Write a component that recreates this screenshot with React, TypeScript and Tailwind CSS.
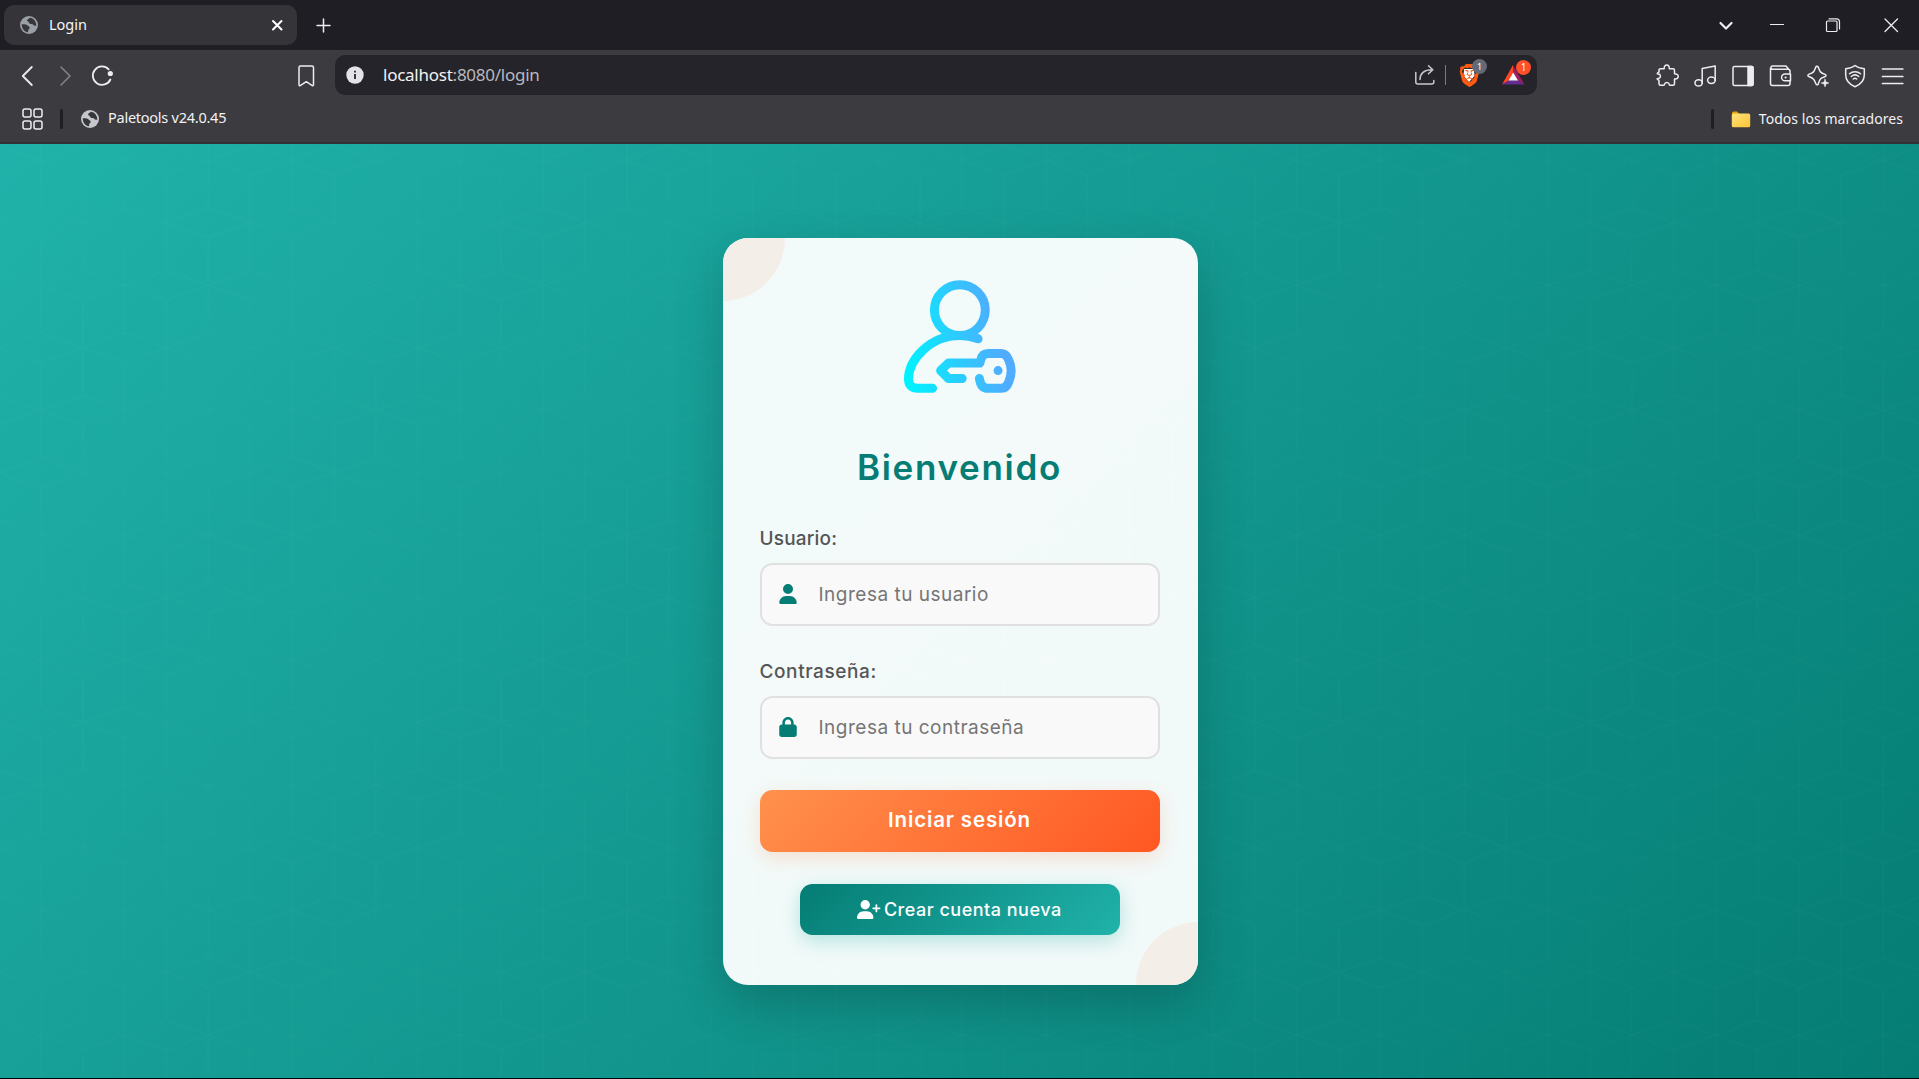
import type { ReactNode } from "react";
import { FaLock, FaUser, FaUserPlus } from "react-icons/fa6";
import { SiBrave } from "react-icons/si";

const LINE = {
  fill: "none",
  stroke: "currentColor",
  strokeWidth: 1.5,
  strokeLinecap: "round",
  strokeLinejoin: "round",
} as const;

function Icon({ className = "", color = "text-[#ededf0]", children }: { className?: string; color?: string; children: ReactNode }) {
  return (
    <svg viewBox="0 0 24 24" className={`size-6 shrink-0 ${color} ${className}`} {...LINE}>
      {children}
    </svg>
  );
}

function Globe({ className = "" }: { className?: string }) {
  return (
    <svg viewBox="0 0 18 18" className={`size-[18px] shrink-0 ${className}`}>
      <circle cx="9" cy="9" r="9" fill="currentColor" />
      <path
        d="M1.700 8.200C3.800 8 6.200 8.200 7.300 9.300c1.200 1.200 2.300 1.300 2.400 2.500.1 1.100-1.300 1.200-1.500 2.300l-.2 2.100C4.400 15.700 1.700 12.500 1.700 8.200ZM9.800 1.800C9 3 7.300 3 7.100 4.200c-.2 1.200 1.400 1.100 1.700 2.100.3 1.100 1.300 1.900 2.700 1.800 1.500-.1 2 1.200 3 1.600.8.300 1.500.1 1.800-.2C16.400 5.600 13.600 2.200 9.800 1.800Z"
        fill="#37363b"
      />
    </svg>
  );
}

function TabStrip() {
  return (
    <div className="flex h-[50px] items-center bg-[#1f1e24] pl-1 pr-4">
      <div className="-mt-px flex h-10 w-[293px] items-center rounded-[10px] bg-[#353439] pl-4 pr-2">
        <Globe className="text-[#9aa0a6]" />
        <span className="ml-[11px] flex-1 text-[14.5px] text-[#f5f5f7]">Login</span>
        <Icon color="text-white">
          <path d="M8 8l8.500 8.500m0-8.500L8 16.500" strokeWidth="2" />
        </Icon>
      </div>
      <Icon className="ml-[14px]">
        <path d="M12.500 6v13M6 12.500h13" />
      </Icon>
      <div className="ml-auto flex items-center">
        <Icon>
          <path d="M6.500 10l5.500 5.500L17.500 10" strokeWidth="2.200" />
        </Icon>
        <Icon className="ml-[27px]">
          <path d="M5.500 11.500h13" strokeWidth="1.200" />
        </Icon>
        <Icon className="ml-8">
          <rect x="5.500" y="8" width="10.500" height="10.500" rx="1" strokeWidth="1.200" />
          <path d="M8 5.800h7.500a3 3 0 0 1 3 3V16" strokeWidth="1.200" />
        </Icon>
        <Icon className="ml-[34px]">
          <path d="M6 6l12.500 12.500M18.500 6L6 18.500" strokeWidth="1.300" />
        </Icon>
      </div>
    </div>
  );
}

function Toolbar() {
  return (
    <div className="flex h-[51px] items-center pl-[15px] pr-[14px]">
      <Icon>
        <path d="M16.800 3L7.800 12l9 9" strokeWidth="1.800" />
      </Icon>
      <Icon className="ml-[14px]" color="text-[#85848a]">
        <path d="M8 3l9 9-9 9" strokeWidth="1.500" />
      </Icon>
      <Icon className="ml-[13px]">
        <path d="M20.400 15.500a9.200 9.200 0 1 1-1.700-10.200" strokeWidth="1.800" />
        <circle cx="20.300" cy="9.500" r="2.600" fill="currentColor" stroke="none" />
      </Icon>
      <Icon className="ml-[181px]">
        <path d="M4 3.500a1.500 1.500 0 0 1 1.500-1.500h11.500a1.500 1.500 0 0 1 1.500 1.500v17.500a.8.8 0 0 1-1.200.6L11.300 17.700l-6.100 3.900a.8.8 0 0 1-1.200-.6Z" />
      </Icon>
      <div className="-mt-px ml-4 flex h-10 w-[1202px] items-center rounded-[10px] bg-[#25242a] pl-[11px] pr-[6px]">
        <svg viewBox="0 0 18 18" className="size-[18px]">
          <circle cx="9" cy="9" r="8.700" fill="#e4e3ea" />
          <path d="M9 8v5M9 4.800v1.700" stroke="#25242a" strokeWidth="1.800" />
        </svg>
        <span className="ml-[19px] text-[17px] tracking-[-0.25px] text-[#f2f2f4]">
          localhost<span className="text-[#b9b8bf]">:8080/login</span>
        </span>
        <Icon className="ml-auto" color="text-[#c9c8ce]">
          <path d="M2.800 9.500v9.500a2 2 0 0 0 2 2h14a2 2 0 0 0 2-2v-1.500M7 16.500c0-6 4-9.800 12-9.800M15.500 2.800l4.300 4-4.300 4" />
        </Icon>
        <div className="ml-2 h-5 w-px bg-[#7b7a80]" />
        <div className="relative ml-[13px] mr-px flex h-6 w-[20px] items-center justify-center">
          <svg viewBox="0 0 20 24" className="absolute inset-0 size-full">
            <path d="M5 6h10l.5 7-5.500 6-5.500-6Z" fill="#fff" />
          </svg>
          <SiBrave className="relative size-[23px] shrink-0 text-[#ff5a12]" />
          <span className="absolute -top-1 left-[13px] flex size-[15px] items-center justify-center rounded-full bg-[#656875] text-[9px] text-white">
            1
          </span>
        </div>
        <div className="relative ml-[22px] h-6 w-[29px]">
          <svg viewBox="0 0 29 24" className="size-full">
            <path d="M11 2L0 21.500l7-4L11.500 10Z" fill="#ff4724" />
            <path d="M11 2l11.500 19.500-7-4L11.500 10Z" fill="#9e1f63" />
            <path d="M0 21.500h22.500l-7-4.200H7Z" fill="#662d91" />
            <path d="M11.200 9.500l4.800 8H6.600Z" fill="#fff" />
          </svg>
          <span className="absolute -top-[3px] left-[14px] flex size-[15px] items-center justify-center rounded-full bg-[#ff5029] text-[10px] text-white">
            1
          </span>
        </div>
      </div>
      <div className="ml-auto flex gap-[13.600px]">
        <Icon>
          <path d="M4 6.200a1.500 1.500 0 0 1 1.500-1.500h3.300c.4 0 .6-.3.500-.7a2.500 2.500 0 1 1 4.900 0c-.1.400.1.700.5.700H18a1.500 1.500 0 0 1 1.500 1.500v3.200c0 .4.300.6.700.6a2.500 2.500 0 1 1 0 4.900c-.4-.1-.7.100-.7.500v4.300a1.500 1.500 0 0 1-1.500 1.500h-2.900c-.4 0-.7-.3-.8-.7a2.500 2.500 0 0 0-4.900 0c-.1.400-.4.700-.8.700H5.500A1.500 1.500 0 0 1 4 19.700v-3c0-.4-.3-.7-.700-.8-.6-.200-1.200-.300-1.200-1.100 2.500 0 3.600-1.500 3.300-3.100C5.200 10.200 4 9.800 2.800 9.900c-.8 0-.6-1 .2-1.200.7-.2 1-.600 1-1.100Z" />
        </Icon>
        <Icon>
          <ellipse cx="5.600" cy="18.900" rx="3.600" ry="3.200" />
          <ellipse cx="18.400" cy="16.300" rx="3.800" ry="3.200" />
          <path d="M9.200 18.900V4.600L22.200 2v14.300" />
        </Icon>
        <Icon>
          <rect x="2" y="2.500" width="20" height="19" rx="1.500" />
          <path d="M17 2.500h4a1 1 0 0 1 1 1v17a1 1 0 0 1-1 1h-4Z" fill="currentColor" />
        </Icon>
        <Icon>
          <path d="M22 9.500V7.200a2 2 0 0 0-2-2H4.200a1.600 1.600 0 0 1 0-3.100H18l2.500 3M2.500 4v15.500a2 2 0 0 0 2 2H20a2 2 0 0 0 2-2V17" />
          <path d="M22.500 10H17a3.400 3.400 0 0 0 0 6.800h5.500Z" />
          <path d="M17.500 13.400h.2" strokeWidth="2" />
        </Icon>
        <Icon>
          <path d="M11 2.300c.7 0 1 .3 1.200.8 1.500 4.700 2.200 5.600 7 7.300 1.100.4 1.100 1.700 0 2.100-2 .7-3.400 1.300-4.400 2.100-1.200 1-1.600 2.400-2.500 5.400-.3 1.100-1.900 1.100-2.300 0C8.400 15.500 7.500 14.200 2.700 12.500c-1.100-.4-1.100-1.700 0-2.100C7.500 8.700 8.300 7.800 9.800 3.100c.2-.5.500-.8 1.200-.8Z" />
          <path d="M19 15l1 3 3 1-3 1-1 3-1-3-3-1 3-1Z" fill="currentColor" strokeWidth=".5" />
        </Icon>
        <Icon>
          <path d="M12 1.500c3 2.500 6 3 9.300 3.200V11c0 6-4 9.500-9.300 11.700C6.700 20.500 2.700 17 2.700 11V4.700C6 4.500 9 4 12 1.500Z" />
          <path d="M6.500 9.700c3-2.700 8-2.700 11 0M8.300 12.500c2.200-1.900 5.200-1.900 7.400 0M10.300 15c1.100-.9 2.300-.9 3.400 0" />
        </Icon>
        <Icon>
          <path d="M1.500 5h20.300M1.500 12.500h20.300M1.500 19.500h20.300" strokeWidth="1.700" />
        </Icon>
      </div>
    </div>
  );
}

function BookmarkBar() {
  return (
    <div className="flex h-[41px] items-center pb-[5px] pl-[21px] pr-4 text-[#f2f2f4]">
      <Icon>
        <rect x="2" y="2" width="8" height="8" rx="2" />
        <rect x="13" y="2" width="8" height="8" rx="2" />
        <rect x="2" y="14" width="8" height="8" rx="2" />
        <rect x="13" y="14" width="8" height="8" rx="2" />
      </Icon>
      <div className="ml-[15px] h-5 w-[3px] rounded-full bg-[#1f1e24]" />
      <Globe className="ml-[18px] text-[#c4c7cb]" />
      <span className="-mt-0.5 ml-[9px] text-[14.5px] tracking-[-0.25px]">Paletools v24.0.45</span>
      <div className="ml-auto h-5 w-[3px] rounded-full bg-[#1f1e24]" />
      <svg viewBox="0 0 20 17" className="ml-[17px] h-[17px] w-5">
        <defs>
          <linearGradient id="folder" x1="0" y1="0" x2="1" y2="1">
            <stop offset="0" stopColor="#ffe27a" />
            <stop offset="1" stopColor="#fbc436" />
          </linearGradient>
        </defs>
        <path d="M1 14V2a1.500 1.500 0 0 1 1.500-1.500H6L8.500 3H17v4Z" fill="#e8a30c" />
        <rect x=".8" y="2.600" width="18.400" height="13.600" rx="1.500" fill="url(#folder)" />
      </svg>
      <span className="-mt-0.5 ml-2 text-[14px] tracking-[0.04px]">Todos los marcadores</span>
    </div>
  );
}

function Backdrop() {
  return (
    <svg className="absolute inset-0 size-full" aria-hidden="true">
      <defs>
        <pattern id="cubes" x="-1.100" y="16.200" width="83.740" height="125" patternUnits="userSpaceOnUse">
          <g fill="none" stroke="#fff" strokeOpacity=".016" strokeWidth="1.300">
            <path d="M0 -15L41.870 0L83.740 -15M0 15L41.870 0L83.740 15" />
            <path d="M0 62.500L41.870 47.500L83.740 62.500L41.870 77.500Z" />
            <path d="M0 110L41.870 125L83.740 110" />
            <path d="M41.870 0V47.500M41.870 77.500V125M0 15V110M83.740 15V110" />
          </g>
        </pattern>
      </defs>
      <rect width="100%" height="100%" fill="url(#cubes)" />
    </svg>
  );
}

function UserKeyLogo() {
  return (
    <svg viewBox="72 60 337 339" className="mt-[42px] h-[113px] w-[112px]">
      <defs>
        <linearGradient id="logo" gradientUnits="userSpaceOnUse" x1="85" y1="350" x2="370" y2="300">
          <stop offset="0" stopColor="#00f2fe" />
          <stop offset="1" stopColor="#4facfe" />
        </linearGradient>
      </defs>
      <g fill="none" stroke="url(#logo)" strokeWidth="27" strokeLinecap="round" strokeLinejoin="round">
        <circle cx="240" cy="150" r="76.500" />
        <path d="M295 236.500Q268 226.500 240 226.500C150 226.500 85.500 300 85.500 358Q86 385.500 114 385.500H158" />
        <path d="M247 356H206L182 332L206 309.500H300L303 300Q307 280.500 325 280.500H365Q380 281 387 300Q402 332 387 367Q380 385.500 365 385.500H325Q303 385.500 299 356" />
        <circle cx="355" cy="332" r="13.500" fill="url(#logo)" stroke="none" />
      </g>
    </svg>
  );
}

interface FieldProps {
  label: string;
  labelTracking: string;
  placeholder: string;
  type: string;
  icon: ReactNode;
}

function Field({ label, labelTracking, placeholder, type, icon }: FieldProps) {
  return (
    <label className="flex w-full flex-col gap-[11px]">
      <span className={`text-[19px] font-medium leading-[27px] text-[#555] ${labelTracking}`}>{label}</span>
      <span className="flex h-[63px] items-center gap-[22px] rounded-[12.500px] border-2 border-[#e0e0e0] bg-[#f9f9f9] pl-[17px] pr-4 text-[#057d74]">
        {icon}
        <input
          type={type}
          placeholder={placeholder}
          className="min-w-0 flex-1 bg-transparent pt-[2px] text-[19px] tracking-[0.500px] outline-none placeholder:text-[#757575] placeholder:opacity-100"
        />
      </span>
    </label>
  );
}

function LoginCard() {
  return (
    <div className="relative flex h-[747px] w-[475px] flex-col items-center overflow-hidden rounded-[25px] bg-white/95 pl-[36px] pr-[38px]">
      <div className="absolute -left-[63px] -top-[62px] size-[125px] rounded-full bg-[#f4eee8]" />
      <div className="absolute -bottom-[62px] -right-[63px] size-[125px] rounded-full bg-[#f4eee8]" />
      <UserKeyLogo />
      <h1 className="mt-12 text-[35px] font-semibold leading-[52px] tracking-[1.700px] text-[#057d74]">Bienvenido</h1>
      <form className="mt-[32px] flex w-[400px] flex-col items-center">
        <Field
          label="Usuario:"
          labelTracking="tracking-[0.200px]"
          placeholder="Ingresa tu usuario"
          type="text"
          icon={<FaUser className="h-5 w-[18px] shrink-0" />}
        />
        <div className="h-8" />
        <Field
          label="Contraseña:"
          labelTracking="tracking-[0.600px]"
          placeholder="Ingresa tu contraseña"
          type="password"
          icon={<FaLock className="h-5 w-[18px] shrink-0" />}
        />
        <button
          type="button"
          className="mt-[31px] h-[62px] w-full rounded-[12.500px] bg-[linear-gradient(135deg,#ff914d,#ff5722)] text-[20.500px] font-semibold tracking-[0.850px] text-white shadow-[0_6px_19px_rgba(255,120,50,0.200)]"
        >
          Iniciar sesión
        </button>
        <button
          type="button"
          className="mt-8 flex h-[51px] w-[320px] items-center justify-center gap-[3px] rounded-[12.500px] bg-[linear-gradient(135deg,#057d74,#20b2aa)] text-[18px] font-medium tracking-[0.500px] text-white shadow-[0_6px_19px_rgba(32,178,170,0.300)]"
        >
          <FaUserPlus className="h-[19px] w-[23.500px]" />
          Crear cuenta nueva
        </button>
      </form>
    </div>
  );
}

export default function App() {
  return (
    <div className="flex h-screen w-full flex-col overflow-hidden bg-black pb-px font-['Noto_Sans',sans-serif]">
      <header className="h-36 shrink-0 border-b-2 border-[#323136] bg-[#3c3b40]">
        <TabStrip />
        <Toolbar />
        <BookmarkBar />
      </header>
      <main className="relative flex flex-1 items-center justify-center bg-[linear-gradient(135deg,#20b2aa,#057d74)] pl-[2px] font-['Inter',sans-serif]">
        <Backdrop />
        <div className="relative rounded-[25px] shadow-[0_19px_50px_rgba(0,0,0,0.200)]">
          <LoginCard />
        </div>
      </main>
    </div>
  );
}
